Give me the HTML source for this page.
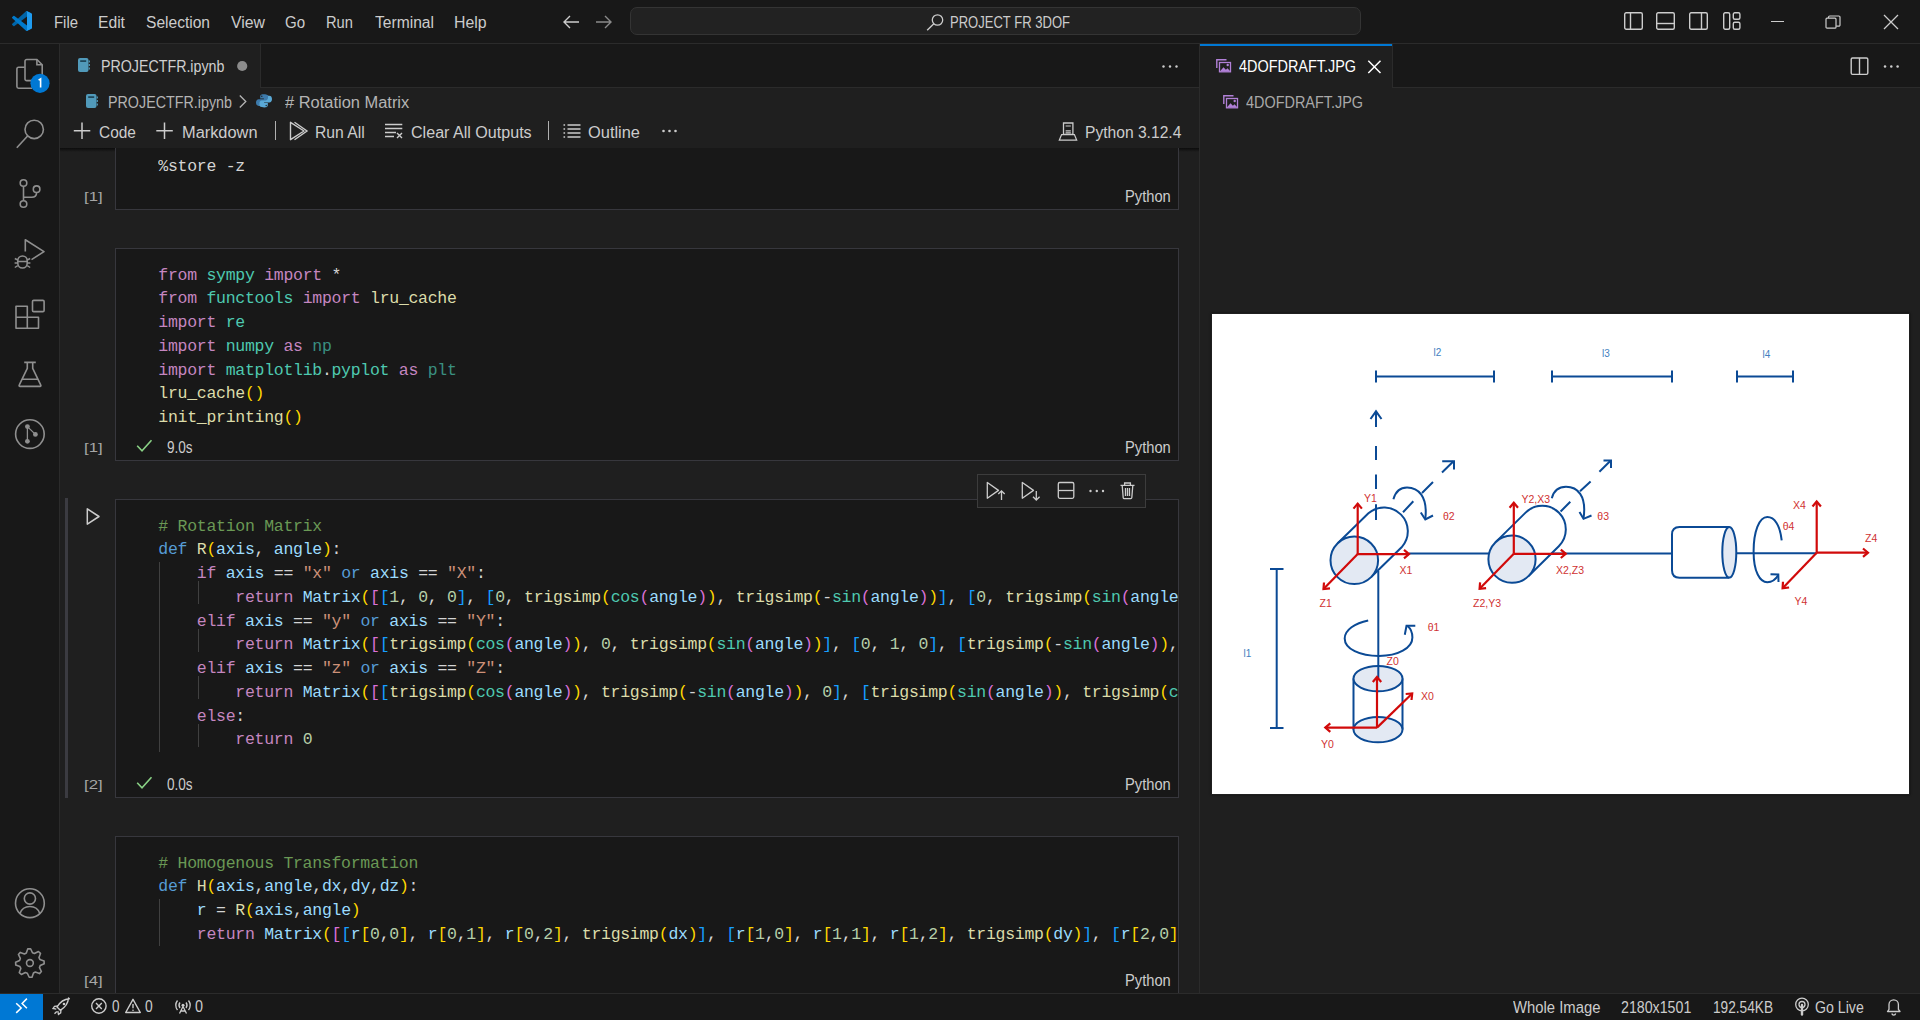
<!DOCTYPE html><html><head><meta charset="utf-8"><style>
html,body{margin:0;padding:0;width:1920px;height:1020px;overflow:hidden;background:#1f1f1f;position:relative}
.t{position:absolute;white-space:pre;line-height:1;transform-origin:0 0}
.code{position:absolute;white-space:pre;overflow:hidden;font-family:"Liberation Mono",monospace;font-size:16.5px;line-height:23.75px;letter-spacing:-0.28px}
svg{overflow:visible}
</style></head><body>
<div style="position:absolute;left:0px;top:0px;width:1920px;height:43px;background:#181818"></div>
<div style="position:absolute;left:0px;top:43px;width:1920px;height:1px;background:#2b2b2b"></div>
<div style="position:absolute;left:0px;top:44px;width:59px;height:949px;background:#181818"></div>
<div style="position:absolute;left:59px;top:44px;width:1px;height:949px;background:#2b2b2b"></div>
<div style="position:absolute;left:60px;top:44px;width:1139px;height:43px;background:#181818"></div>
<div style="position:absolute;left:60px;top:87px;width:1139px;height:1px;background:#2b2b2b"></div>
<div style="position:absolute;left:60px;top:44px;width:200px;height:44px;background:#1f1f1f"></div>
<div style="position:absolute;left:260px;top:44px;width:1px;height:43px;background:#2b2b2b"></div>
<div style="position:absolute;left:1199px;top:44px;width:1px;height:949px;background:#2b2b2b"></div>
<div style="position:absolute;left:1200px;top:44px;width:720px;height:43px;background:#181818"></div>
<div style="position:absolute;left:1200px;top:87px;width:720px;height:1px;background:#2b2b2b"></div>
<div style="position:absolute;left:1200px;top:44px;width:192px;height:44px;background:#1f1f1f"></div>
<div style="position:absolute;left:1200px;top:44px;width:192px;height:1.5px;background:#0078d4"></div>
<div style="position:absolute;left:1392px;top:44px;width:1px;height:43px;background:#2b2b2b"></div>
<div style="position:absolute;left:0px;top:993px;width:1920px;height:27px;background:#181818"></div>
<div style="position:absolute;left:0px;top:993px;width:1920px;height:1px;background:#2b2b2b"></div>
<div style="position:absolute;left:0px;top:994px;width:43px;height:26px;background:#0078d4"></div>
<div style="position:absolute;left:60px;top:148px;width:1139px;height:4px;background:linear-gradient(#0c0c0c,rgba(24,24,24,0))"></div>
<svg style="position:absolute;left:12px;top:11px;" width="20" height="20" viewBox="0 0 100 100" fill="none"><path fill="#0065a9" d="M96.5 10.8 75.9.9a6.2 6.2 0 0 0-7.1 1.2L1.4 63.6a4.2 4.2 0 0 0 0 6.1l5.5 5a4.2 4.2 0 0 0 5.3.2L93.5 13.3c2.7-2.1 6.5-.1 6.5 3.3v-.2a6.2 6.2 0 0 0-3.5-5.6z"/><path fill="#007acc" d="M96.5 89.2 75.9 99.1a6.2 6.2 0 0 1-7.1-1.2L1.4 36.4a4.2 4.2 0 0 1 0-6.1l5.5-5a4.2 4.2 0 0 1 5.3-.2l81.3 61.7c2.7 2.1 6.5.1 6.5-3.3v.2a6.2 6.2 0 0 1-3.5 5.6z"/><path fill="#1f9cf0" d="M75.9 99.1a6.2 6.2 0 0 1-7.1-1.2c2.3 2.3 6.2.7 6.2-2.6V4.7c0-3.3-3.9-4.9-6.2-2.6a6.2 6.2 0 0 1 7.1-1.2l20.6 9.9A6.2 6.2 0 0 1 100 16.4v67.2a6.2 6.2 0 0 1-3.5 5.6z"/></svg>
<div class="t" style="left:54.00px;top:15.35px;font-size:16px;color:#cccccc;font-family:'Liberation Sans', sans-serif;transform:scaleX(0.9302);">File</div>
<div class="t" style="left:98.00px;top:15.35px;font-size:16px;color:#cccccc;font-family:'Liberation Sans', sans-serif;transform:scaleX(0.9783);">Edit</div>
<div class="t" style="left:146.00px;top:15.35px;font-size:16px;color:#cccccc;font-family:'Liberation Sans', sans-serif;transform:scaleX(0.9726);">Selection</div>
<div class="t" style="left:230.50px;top:15.35px;font-size:16px;color:#cccccc;font-family:'Liberation Sans', sans-serif;transform:scaleX(0.9884);">View</div>
<div class="t" style="left:285.00px;top:15.35px;font-size:16px;color:#cccccc;font-family:'Liberation Sans', sans-serif;transform:scaleX(0.9390);">Go</div>
<div class="t" style="left:326.00px;top:15.35px;font-size:16px;color:#cccccc;font-family:'Liberation Sans', sans-serif;transform:scaleX(0.9184);">Run</div>
<div class="t" style="left:374.60px;top:15.35px;font-size:16px;color:#cccccc;font-family:'Liberation Sans', sans-serif;transform:scaleX(0.9752);">Terminal</div>
<div class="t" style="left:454.40px;top:15.35px;font-size:16px;color:#cccccc;font-family:'Liberation Sans', sans-serif;transform:scaleX(0.9909);">Help</div>
<svg style="position:absolute;left:562px;top:14px;" width="18" height="16" viewBox="0 0 18 16" fill="none"><path d="M17 8H2M8 2 2 8l6 6" stroke="#cccccc" stroke-width="1.4"/></svg>
<svg style="position:absolute;left:595px;top:14px;" width="18" height="16" viewBox="0 0 18 16" fill="none"><path d="M1 8h15M10 2l6 6-6 6" stroke="#8b8b8b" stroke-width="1.4"/></svg>
<div style="position:absolute;left:630px;top:7px;width:731px;height:28px;background:#222222;border:1px solid #343434;border-radius:7px;box-sizing:border-box"></div>
<svg style="position:absolute;left:925px;top:13px;" width="20" height="18" viewBox="0 0 20 18" fill="none"><circle cx="12.5" cy="7" r="5.2" stroke="#cccccc" stroke-width="1.3"/><path d="M8.8 10.8 2.2 17.2" stroke="#cccccc" stroke-width="1.4"/></svg>
<div class="t" style="left:950.00px;top:14.95px;font-size:16px;color:#cccccc;font-family:'Liberation Sans', sans-serif;transform:scaleX(0.8147);">PROJECT FR 3DOF</div>
<svg style="position:absolute;left:1624px;top:12px;" width="19" height="18" viewBox="0 0 19 18" fill="none"><rect x=".7" y=".7" width="17.6" height="16.6" rx="1.5" stroke="#cccccc" stroke-width="1.4"/><path d="M6.5 1v16" stroke="#cccccc" stroke-width="1.4"/></svg>
<svg style="position:absolute;left:1656px;top:12px;" width="19" height="18" viewBox="0 0 19 18" fill="none"><rect x=".7" y=".7" width="17.6" height="16.6" rx="1.5" stroke="#cccccc" stroke-width="1.4"/><path d="M1 11.5h17" stroke="#cccccc" stroke-width="1.4"/></svg>
<svg style="position:absolute;left:1689px;top:12px;" width="19" height="18" viewBox="0 0 19 18" fill="none"><rect x=".7" y=".7" width="17.6" height="16.6" rx="1.5" stroke="#cccccc" stroke-width="1.4"/><path d="M12.5 1v16" stroke="#cccccc" stroke-width="1.4"/></svg>
<svg style="position:absolute;left:1723px;top:12px;" width="18" height="18" viewBox="0 0 18 18" fill="none"><rect x=".7" y=".7" width="6" height="16.6" rx="1.5" stroke="#cccccc" stroke-width="1.4"/><rect x="10.3" y=".7" width="6.6" height="6.6" rx="1.5" stroke="#cccccc" stroke-width="1.4"/><rect x="10.3" y="10.3" width="6.6" height="7" rx="1.5" stroke="#cccccc" stroke-width="1.4"/></svg>
<div style="position:absolute;left:1771px;top:21px;width:13px;height:1.2px;background:#cccccc"></div>
<svg style="position:absolute;left:1825px;top:15px;" width="16" height="14" viewBox="0 0 16 14" fill="none"><rect x="1" y="3.2" width="10" height="10" rx="1" stroke="#cccccc" stroke-width="1.2"/><path d="M3.5 3V2.2A1.2 1.2 0 0 1 4.7 1H13.8A1.2 1.2 0 0 1 15 2.2V10A1.2 1.2 0 0 1 13.8 11.2H11.2" stroke="#cccccc" stroke-width="1.2"/></svg>
<svg style="position:absolute;left:1883px;top:14px;" width="16" height="16" viewBox="0 0 16 16" fill="none"><path d="M1 1 15 15M15 1 1 15" stroke="#cccccc" stroke-width="1.3"/></svg>
<svg style="position:absolute;left:10px;top:52px;" width="40" height="42" viewBox="10 52 40 42" fill="none"><path d="M25 61.2a1.7 1.7 0 0 1 1.7-1.7H36.9L42.2 64.8V78.9a1.7 1.7 0 0 1-1.7 1.7H26.7a1.7 1.7 0 0 1-1.7-1.7Z" stroke="#8f8f8f" stroke-width="1.6"/><path d="M36.9 59.8V64.8H42" stroke="#8f8f8f" stroke-width="1.6"/><path d="M24.6 67.2H18.6a1.7 1.7 0 0 0-1.7 1.7V86.5a1.7 1.7 0 0 0 1.7 1.7H32" stroke="#8f8f8f" stroke-width="1.6"/><circle cx="40" cy="83.3" r="9.6" fill="#0078d4"/><path d="M38.6 80.2 40.6 78.9V87.6" stroke="#ffffff" stroke-width="1.6"/></svg>
<svg style="position:absolute;left:10px;top:114px;" width="40" height="40" viewBox="10 114 40 40" fill="none"><circle cx="34.2" cy="129.4" r="9.2" stroke="#8f8f8f" stroke-width="1.6"/><path d="M27.6 136 16.8 147.8" stroke="#8f8f8f" stroke-width="1.6"/></svg>
<svg style="position:absolute;left:10px;top:174px;" width="40" height="40" viewBox="10 174 40 40" fill="none"><circle cx="23.5" cy="183" r="3.3" stroke="#8f8f8f" stroke-width="1.6"/><circle cx="23.5" cy="204" r="3.3" stroke="#8f8f8f" stroke-width="1.6"/><circle cx="36.6" cy="189.2" r="3.3" stroke="#8f8f8f" stroke-width="1.6"/><path d="M23.5 186.3V200.7M36.6 192.5c0 3.5-1.5 4.8-5 4.8H23.5" stroke="#8f8f8f" stroke-width="1.6"/></svg>
<svg style="position:absolute;left:10px;top:234px;" width="40" height="40" viewBox="10 234 40 40" fill="none"><path d="M25.3 251.5V239.8L44 251.6 31.5 259.6" stroke="#8f8f8f" stroke-width="1.6" stroke-linejoin="round"/><rect x="17.8" y="256" width="9.4" height="12" rx="4.7" stroke="#8f8f8f" stroke-width="1.6"/><path d="M17.8 261.5h9.4M14.8 258.5l3 1.5M30.2 258.5l-3 1.5M14.8 267.5l3-1.8M30.2 267.5l-3-1.8M14.6 263h3.2M27.2 263h3.2" stroke="#8f8f8f" stroke-width="1.4"/></svg>
<svg style="position:absolute;left:10px;top:294px;" width="40" height="40" viewBox="10 294 40 40" fill="none"><path d="M16 306.3h11.3v22H16zM16 317.3h22.5v11H16z" stroke="#8f8f8f" stroke-width="1.6" stroke-linejoin="round"/><rect x="32.5" y="300.4" width="11.6" height="11.2" rx="1.2" stroke="#8f8f8f" stroke-width="1.6"/></svg>
<svg style="position:absolute;left:10px;top:356px;" width="40" height="36" viewBox="10 356 40 36" fill="none"><path d="M24.2 362.4h11.6M27.3 362.4v6L19.2 385.2a.8.8 0 0 0 .7 1.2h20.2a.8.8 0 0 0 .7-1.2L32.7 368.4v-6M22.3 379.2h15.4" stroke="#8f8f8f" stroke-width="1.6" stroke-linejoin="round"/></svg>
<svg style="position:absolute;left:10px;top:414px;" width="40" height="40" viewBox="10 414 40 40" fill="none"><circle cx="29.9" cy="434.1" r="14.3" stroke="#8f8f8f" stroke-width="1.6"/><circle cx="27.4" cy="426.6" r="2.4" fill="#8f8f8f"/><circle cx="27.4" cy="441.3" r="2.4" fill="#8f8f8f"/><circle cx="35.4" cy="434.4" r="2.4" fill="#8f8f8f"/><path d="M27.4 426.6V441.3M27.4 426.6 35.4 434.4" stroke="#8f8f8f" stroke-width="1.3"/></svg>
<svg style="position:absolute;left:10px;top:882px;" width="40" height="42" viewBox="10 882 40 42" fill="none"><circle cx="29.9" cy="903.2" r="14.4" stroke="#8f8f8f" stroke-width="1.6"/><circle cx="29.9" cy="898.5" r="5.6" stroke="#8f8f8f" stroke-width="1.6"/><path d="M20 913.5c1.5-4.5 5-7 9.9-7s8.4 2.5 9.9 7" stroke="#8f8f8f" stroke-width="1.6"/></svg>
<svg style="position:absolute;left:10px;top:942px;" width="40" height="42" viewBox="10 942 40 42" fill="none"><path d="M27.80 948.85 L30.60 948.72 L32.48 952.72 L34.43 953.42 L38.42 951.51 L40.50 953.40 L38.99 957.55 L39.88 959.43 L44.05 960.90 L44.18 963.70 L40.18 965.58 L39.48 967.53 L41.39 971.52 L39.50 973.60 L35.35 972.09 L33.47 972.98 L32.00 977.15 L29.20 977.28 L27.32 973.28 L25.37 972.58 L21.38 974.49 L19.30 972.60 L20.81 968.45 L19.92 966.57 L15.75 965.10 L15.62 962.30 L19.62 960.42 L20.32 958.47 L18.41 954.48 L20.30 952.40 L24.45 953.91 L26.33 953.02Z" stroke="#8f8f8f" stroke-width="1.6" stroke-linejoin="round"/><circle cx="29.9" cy="963" r="3.4" stroke="#8f8f8f" stroke-width="1.6"/></svg>
<svg style="position:absolute;left:77px;top:57px;" width="16" height="17" viewBox="77 57 16 17" fill="none"><rect x="78" y="58" width="10.5" height="14" rx="2" fill="#519aba"/><rect x="80.2" y="60.3" width="6" height="1.6" fill="#1b3f50"/><path d="M89.3 60.5v2M89.3 64v2M89.3 67.5v2" stroke="#519aba" stroke-width="1.2"/></svg>
<div class="t" style="left:100.60px;top:59.35px;font-size:16px;color:#cfcfcf;font-family:'Liberation Sans', sans-serif;transform:scaleX(0.8897);">PROJECTFR.ipynb</div>
<svg style="position:absolute;left:236px;top:60px;" width="12" height="12" viewBox="236 60 12 12" fill="none"><circle cx="242.2" cy="66" r="5.1" fill="#8c8c8c"/></svg>
<svg style="position:absolute;left:1161px;top:64px;" width="5" height="5" viewBox="1161 64 5 5" fill="none"><circle cx="1163.5" cy="66.5" r="1.2" fill="#cccccc"/></svg>
<svg style="position:absolute;left:1168px;top:64px;" width="5" height="5" viewBox="1168 64 5 5" fill="none"><circle cx="1170" cy="66.5" r="1.2" fill="#cccccc"/></svg>
<svg style="position:absolute;left:1174px;top:64px;" width="5" height="5" viewBox="1174 64 5 5" fill="none"><circle cx="1176.5" cy="66.5" r="1.2" fill="#cccccc"/></svg>
<svg style="position:absolute;left:85px;top:93px;" width="16" height="17" viewBox="85 93 16 17" fill="none"><rect x="86" y="94" width="10.5" height="14" rx="2" fill="#519aba"/><rect x="88.2" y="96.3" width="6" height="1.6" fill="#1b3f50"/><path d="M97.3 96.5v2M97.3 100v2M97.3 103.5v2" stroke="#519aba" stroke-width="1.2"/></svg>
<div class="t" style="left:108.00px;top:95.35px;font-size:16px;color:#b4b4b4;font-family:'Liberation Sans', sans-serif;transform:scaleX(0.8940);">PROJECTFR.ipynb</div>
<svg style="position:absolute;left:236px;top:92px;" width="14" height="18" viewBox="236 92 14 18" fill="none"><path d="M239.8 95.5 245.8 101.5 239.8 107.5" stroke="#b4b4b4" stroke-width="1.3"/></svg>
<svg style="position:absolute;left:255px;top:92px;" width="18" height="18" viewBox="255 92 18 18" fill="none"><path d="M263.8 94.3c-3.6 0-3.6 1.6-3.6 2.4v1.9h3.7v.6h-5.2c-1.6 0-2.7 1.3-2.7 3.4s1.1 3.3 2.7 3.3h1.3v-1.9c0-1.5 1.2-2.7 2.7-2.7h3.5c1.3 0 2.3-1 2.3-2.3v-2.4c0-1.3-1.1-2.3-4.7-2.3zm-2 1.2a.7.7 0 1 1 0 1.4.7.7 0 0 1 0-1.4z" fill="#3d7aab"/><path d="M264.2 107.4c3.6 0 3.6-1.6 3.6-2.4v-1.9h-3.7v-.6h5.2c1.6 0 2.7-1.3 2.7-3.4s-1.1-3.3-2.7-3.3H268v1.9c0 1.5-1.2 2.7-2.7 2.7h-3.5c-1.3 0-2.3 1-2.3 2.3v2.4c0 1.3 1.1 2.3 4.7 2.3zm2-1.2a.7.7 0 1 1 0-1.4.7.7 0 0 1 0 1.4z" fill="#5aa9d6"/></svg>
<div class="t" style="left:284.60px;top:95.15px;font-size:16px;color:#b4b4b4;font-family:'Liberation Sans', sans-serif;transform:scaleX(1.0273);"># Rotation Matrix</div>
<svg style="position:absolute;left:70px;top:118px;" width="24" height="24" viewBox="70 118 24 24" fill="none"><path d="M82 122.5v16.5M73.8 130.8h16.5" stroke="#cccccc" stroke-width="1.5"/></svg>
<div class="t" style="left:99.00px;top:125.35px;font-size:16px;color:#cccccc;font-family:'Liberation Sans', sans-serif;transform:scaleX(0.9661);">Code</div>
<svg style="position:absolute;left:152px;top:118px;" width="24" height="24" viewBox="152 118 24 24" fill="none"><path d="M164.5 122.5v16.5M156.3 130.8h16.5" stroke="#cccccc" stroke-width="1.5"/></svg>
<div class="t" style="left:182.00px;top:125.35px;font-size:16px;color:#cccccc;font-family:'Liberation Sans', sans-serif;transform:scaleX(1.0230);">Markdown</div>
<div style="position:absolute;left:275px;top:121px;width:1.3px;height:19px;background:#b0b0b0"></div>
<svg style="position:absolute;left:286px;top:120px;" width="24" height="22" viewBox="286 120 24 22" fill="none"><path d="M290.5 122.3 304 131 290.5 139.7Z" stroke="#cccccc" stroke-width="1.4" stroke-linejoin="round"/><path d="M294.5 122.3 307 131 294.5 139.7" stroke="#cccccc" stroke-width="1.4"/></svg>
<div class="t" style="left:314.80px;top:125.35px;font-size:16px;color:#cccccc;font-family:'Liberation Sans', sans-serif;transform:scaleX(0.9803);">Run All</div>
<svg style="position:absolute;left:382px;top:120px;" width="24" height="22" viewBox="382 120 24 22" fill="none"><path d="M385 124.5h17.3M385 128.5h17.3M385 132.5h11M385 136.5h9" stroke="#cccccc" stroke-width="1.4"/><path d="M397 133l5 5M402 133l-5 5" stroke="#cccccc" stroke-width="1.4"/></svg>
<div class="t" style="left:410.70px;top:125.35px;font-size:16px;color:#cccccc;font-family:'Liberation Sans', sans-serif;transform:scaleX(1.0050);">Clear All Outputs</div>
<div style="position:absolute;left:548px;top:121px;width:1.3px;height:19px;background:#b0b0b0"></div>
<svg style="position:absolute;left:560px;top:120px;" width="24" height="22" viewBox="560 120 24 22" fill="none"><path d="M563.5 125h1.6M563.5 129h1.6M563.5 133h1.6M563.5 137h1.6M567.5 125h13M567.5 129h13M567.5 133h13M567.5 137h13" stroke="#cccccc" stroke-width="1.4"/></svg>
<div class="t" style="left:588.00px;top:125.35px;font-size:16px;color:#cccccc;font-family:'Liberation Sans', sans-serif;transform:scaleX(1.0256);">Outline</div>
<svg style="position:absolute;left:661px;top:129px;" width="5" height="5" viewBox="661 129 5 5" fill="none"><circle cx="663.5" cy="131" r="1.3" fill="#cccccc"/></svg>
<svg style="position:absolute;left:667px;top:129px;" width="5" height="5" viewBox="667 129 5 5" fill="none"><circle cx="669.5" cy="131" r="1.3" fill="#cccccc"/></svg>
<svg style="position:absolute;left:673px;top:129px;" width="5" height="5" viewBox="673 129 5 5" fill="none"><circle cx="675.5" cy="131" r="1.3" fill="#cccccc"/></svg>
<svg style="position:absolute;left:1056px;top:120px;" width="24" height="24" viewBox="1056 120 24 24" fill="none"><path d="M1063.5 123h9.4v11.3h-9.4z" stroke="#cccccc" stroke-width="1.3"/><path d="M1059.3 140.2h17.4l-2.3-5.6h-12.8zM1065.6 126h5.2M1065.6 130.8h5.2M1065.6 132.8h5.2" stroke="#cccccc" stroke-width="1.2"/></svg>
<div class="t" style="left:1085.40px;top:125.35px;font-size:16px;color:#cccccc;font-family:'Liberation Sans', sans-serif;transform:scaleX(0.9757);">Python 3.12.4</div>
<svg style="position:absolute;left:1214.5px;top:58px;" width="18" height="16" viewBox="1214.5 58 18 16" fill="none"><path d="M1216.3 68V59.8H1226.0" stroke="#b180d7" stroke-width="1.4"/><rect x="1219.0" y="62.5" width="11" height="9.3" stroke="#b180d7" stroke-width="1.3"/><path d="M1219.3 71.5l3.7-4.2 2.4 2.5 1.6-1.6 3 3.3z" fill="#b180d7"/><circle cx="1227.2" cy="65" r="1.2" fill="#b180d7"/></svg>
<div class="t" style="left:1238.60px;top:59.35px;font-size:16px;color:#ffffff;font-family:'Liberation Sans', sans-serif;transform:scaleX(0.9014);">4DOFDRAFT.JPG</div>
<svg style="position:absolute;left:1364px;top:57px;" width="20" height="20" viewBox="1364 57 20 20" fill="none"><path d="M1368.3 60.8 1380.5 73M1380.5 60.8 1368.3 73" stroke="#ffffff" stroke-width="1.5"/></svg>
<svg style="position:absolute;left:1848px;top:55px;" width="24" height="24" viewBox="1848 55 24 24" fill="none"><rect x="1851.2" y="58" width="16.6" height="16.4" rx="1.3" stroke="#cccccc" stroke-width="1.4"/><path d="M1859.5 58v16.4" stroke="#cccccc" stroke-width="1.4"/></svg>
<svg style="position:absolute;left:1883px;top:64px;" width="5" height="5" viewBox="1883 64 5 5" fill="none"><circle cx="1885" cy="66.5" r="1.25" fill="#cccccc"/></svg>
<svg style="position:absolute;left:1889px;top:64px;" width="5" height="5" viewBox="1889 64 5 5" fill="none"><circle cx="1891.3" cy="66.5" r="1.25" fill="#cccccc"/></svg>
<svg style="position:absolute;left:1895px;top:64px;" width="5" height="5" viewBox="1895 64 5 5" fill="none"><circle cx="1897.6" cy="66.5" r="1.25" fill="#cccccc"/></svg>
<svg style="position:absolute;left:1222px;top:94px;" width="18" height="16" viewBox="1222 94 18 16" fill="none"><path d="M1223.8 104V95.8H1233.5" stroke="#b180d7" stroke-width="1.4"/><rect x="1226.5" y="98.5" width="11" height="9.3" stroke="#b180d7" stroke-width="1.3"/><path d="M1226.8 107.5l3.7-4.2 2.4 2.5 1.6-1.6 3 3.3z" fill="#b180d7"/><circle cx="1234.7" cy="101" r="1.2" fill="#b180d7"/></svg>
<div class="t" style="left:1246.00px;top:95.35px;font-size:16px;color:#a9a9a9;font-family:'Liberation Sans', sans-serif;transform:scaleX(0.9014);">4DOFDRAFT.JPG</div>
<svg style="position:absolute;left:10px;top:996px;" width="24" height="22" viewBox="10 996 24 22" fill="none"><path d="M16.2 1003.2 21.2 1008 16.2 1012.9M26.9 998.6 22.1 1003.4 26.9 1008.3" stroke="#ffffff" stroke-width="1.5"/></svg>
<svg style="position:absolute;left:50px;top:995px;" width="24" height="22" viewBox="50 995 24 22" fill="none"><path d="M69.3 998.8c-5 .3-9 2.8-12.3 8.2l3.3 3.3c5.4-3.3 7.9-7.3 8.2-12.3z" stroke="#cccccc" stroke-width="1.4" stroke-linejoin="round"/><path d="M58 1006l-3.5.3-1.5 2.2 3.3.7M61 1009.3l-.3 3.5-2.2 1.5-.7-3.3M54.5 1013.8l2.3-2.3" stroke="#cccccc" stroke-width="1.3"/><circle cx="64" cy="1004" r="1.3" fill="#cccccc"/></svg>
<svg style="position:absolute;left:88px;top:995px;" width="22" height="22" viewBox="88 995 22 22" fill="none"><circle cx="98.9" cy="1006" r="7.2" stroke="#cccccc" stroke-width="1.4"/><path d="M96 1003.1l5.8 5.8M101.8 1003.1l-5.8 5.8" stroke="#cccccc" stroke-width="1.4"/></svg>
<div class="t" style="left:111.70px;top:999.05px;font-size:16px;color:#cccccc;font-family:'Liberation Sans', sans-serif;transform:scaleX(0.8427);">0</div>
<svg style="position:absolute;left:123px;top:995px;" width="20" height="20" viewBox="123 995 20 20" fill="none"><path d="M133 999.3 140.3 1012.5H125.7Z" stroke="#cccccc" stroke-width="1.4" stroke-linejoin="round"/><path d="M133 1004v4.3" stroke="#cccccc" stroke-width="1.4"/><circle cx="133" cy="1010.3" r=".8" fill="#cccccc"/></svg>
<div class="t" style="left:145.30px;top:999.05px;font-size:16px;color:#cccccc;font-family:'Liberation Sans', sans-serif;transform:scaleX(0.8652);">0</div>
<svg style="position:absolute;left:172px;top:995px;" width="22" height="22" viewBox="172 995 22 22" fill="none"><path d="M177.5 1000.5a8 8 0 0 0 0 9.5M188.5 1000.5a8 8 0 0 1 0 9.5M180 1002.5a4.5 4.5 0 0 0 0 5.5M186 1002.5a4.5 4.5 0 0 1 0 5.5" stroke="#cccccc" stroke-width="1.3"/><circle cx="183" cy="1005.2" r="1.5" fill="#cccccc"/><path d="M183 1006.5l-3.5 7M183 1006.5l3.5 7M180.8 1011h4.4" stroke="#cccccc" stroke-width="1.3"/></svg>
<div class="t" style="left:195.00px;top:999.05px;font-size:16px;color:#cccccc;font-family:'Liberation Sans', sans-serif;transform:scaleX(0.8989);">0</div>
<div class="t" style="left:1512.80px;top:999.65px;font-size:16px;color:#cccccc;font-family:'Liberation Sans', sans-serif;transform:scaleX(0.9279);">Whole Image</div>
<div class="t" style="left:1621.00px;top:999.65px;font-size:16px;color:#cccccc;font-family:'Liberation Sans', sans-serif;transform:scaleX(0.8876);">2180x1501</div>
<div class="t" style="left:1712.60px;top:999.65px;font-size:16px;color:#cccccc;font-family:'Liberation Sans', sans-serif;transform:scaleX(0.8549);">192.54KB</div>
<svg style="position:absolute;left:1793px;top:996px;" width="18" height="20" viewBox="1793 996 18 20" fill="none"><circle cx="1802" cy="1004.5" r="6.3" stroke="#cccccc" stroke-width="1.3"/><circle cx="1802" cy="1004.5" r="3" stroke="#cccccc" stroke-width="1.3"/><path d="M1802 1005v9.5" stroke="#cccccc" stroke-width="2.4" stroke-linecap="round"/></svg>
<div class="t" style="left:1814.60px;top:999.65px;font-size:16px;color:#cccccc;font-family:'Liberation Sans', sans-serif;transform:scaleX(0.8857);">Go Live</div>
<svg style="position:absolute;left:1884px;top:996px;" width="18" height="20" viewBox="1884 996 18 20" fill="none"><path d="M1887.5 1011.5h12.5l-1.6-2.2v-4.8a4.7 4.7 0 0 0-9.4 0v4.8z" stroke="#cccccc" stroke-width="1.3" stroke-linejoin="round"/><path d="M1891.8 1013.5a2 2 0 0 0 3.9 0" stroke="#cccccc" stroke-width="1.3"/></svg>
<div style="position:absolute;left:60px;top:148px;width:1139px;height:845px;overflow:hidden" id="nb">
<div style="position:absolute;left:-60px;top:-148px;width:1920px;height:1020px">
<div style="position:absolute;left:115px;top:140px;width:1064px;height:70px;background:#181818;border:1px solid #37373d;box-sizing:border-box"></div>
<div class="code" style="left:158.3px;top:154.73px;width:1019.7px"><span style="color:#d4d4d4">%store -z</span></div>
<div class="t" style="left:84.00px;top:189.87px;font-size:13.5px;color:#a6a6a6;font-family:'Liberation Sans', sans-serif;transform:scaleX(1.2400);">[1]</div>
<div class="t" style="left:1125.30px;top:188.85px;font-size:16px;color:#cccccc;font-family:'Liberation Sans', sans-serif;transform:scaleX(0.9177);">Python</div>
<div style="position:absolute;left:115px;top:248px;width:1064px;height:213px;background:#181818;border:1px solid #37373d;box-sizing:border-box"></div>
<div class="code" style="left:158.3px;top:263.73px;width:1019.7px"><span style="color:#c586c0">from</span><span style="color:#d4d4d4"> </span><span style="color:#4ec9b0">sympy</span><span style="color:#d4d4d4"> </span><span style="color:#c586c0">import</span><span style="color:#d4d4d4"> </span><span style="color:#d4d4d4">*</span></div>
<div class="code" style="left:158.3px;top:287.48px;width:1019.7px"><span style="color:#c586c0">from</span><span style="color:#d4d4d4"> </span><span style="color:#4ec9b0">functools</span><span style="color:#d4d4d4"> </span><span style="color:#c586c0">import</span><span style="color:#d4d4d4"> </span><span style="color:#dcdcaa">lru_cache</span></div>
<div class="code" style="left:158.3px;top:311.23px;width:1019.7px"><span style="color:#c586c0">import</span><span style="color:#d4d4d4"> </span><span style="color:#4ec9b0">re</span></div>
<div class="code" style="left:158.3px;top:334.98px;width:1019.7px"><span style="color:#c586c0">import</span><span style="color:#d4d4d4"> </span><span style="color:#4ec9b0">numpy</span><span style="color:#d4d4d4"> </span><span style="color:#c586c0">as</span><span style="color:#d4d4d4"> </span><span style="color:#3a8f80">np</span></div>
<div class="code" style="left:158.3px;top:358.73px;width:1019.7px"><span style="color:#c586c0">import</span><span style="color:#d4d4d4"> </span><span style="color:#4ec9b0">matplotlib</span><span style="color:#d4d4d4">.</span><span style="color:#4ec9b0">pyplot</span><span style="color:#d4d4d4"> </span><span style="color:#c586c0">as</span><span style="color:#d4d4d4"> </span><span style="color:#3a8f80">plt</span></div>
<div class="code" style="left:158.3px;top:382.48px;width:1019.7px"><span style="color:#dcdcaa">lru_cache</span><span style="color:#ffd700">(</span><span style="color:#ffd700">)</span></div>
<div class="code" style="left:158.3px;top:406.23px;width:1019.7px"><span style="color:#dcdcaa">init_printing</span><span style="color:#ffd700">(</span><span style="color:#ffd700">)</span></div>
<div class="t" style="left:84.00px;top:440.87px;font-size:13.5px;color:#a6a6a6;font-family:'Liberation Sans', sans-serif;transform:scaleX(1.2400);">[1]</div>
<svg style="position:absolute;left:134px;top:438px;" width="20" height="16" viewBox="134 438 20 16" fill="none"><path d="M137.2 445.8 142 450.8 151.5 440.2" stroke="#89d185" stroke-width="1.6"/></svg>
<div class="t" style="left:167.40px;top:439.85px;font-size:16px;color:#cccccc;font-family:'Liberation Sans', sans-serif;transform:scaleX(0.8477);">9.0s</div>
<div class="t" style="left:1125.30px;top:439.85px;font-size:16px;color:#cccccc;font-family:'Liberation Sans', sans-serif;transform:scaleX(0.9177);">Python</div>
<div style="position:absolute;left:65px;top:498px;width:3px;height:300px;background:#3b3b41"></div>
<div style="position:absolute;left:115px;top:499px;width:1064px;height:299px;background:#181818;border:1px solid #37373d;box-sizing:border-box"></div>
<div class="code" style="left:158.3px;top:514.73px;width:1019.7px"><span style="color:#6a9955"># Rotation Matrix</span></div>
<div class="code" style="left:158.3px;top:538.48px;width:1019.7px"><span style="color:#569cd6">def</span><span style="color:#d4d4d4"> </span><span style="color:#dcdcaa">R</span><span style="color:#ffd700">(</span><span style="color:#9cdcfe">axis</span><span style="color:#d4d4d4">,</span><span style="color:#d4d4d4"> </span><span style="color:#9cdcfe">angle</span><span style="color:#ffd700">)</span><span style="color:#d4d4d4">:</span></div>
<div class="code" style="left:158.3px;top:562.23px;width:1019.7px"><span style="color:#d4d4d4"> </span><span style="color:#d4d4d4"> </span><span style="color:#d4d4d4"> </span><span style="color:#d4d4d4"> </span><span style="color:#c586c0">if</span><span style="color:#d4d4d4"> </span><span style="color:#9cdcfe">axis</span><span style="color:#d4d4d4"> </span><span style="color:#d4d4d4">=</span><span style="color:#d4d4d4">=</span><span style="color:#d4d4d4"> </span><span style="color:#ce9178">&quot;x&quot;</span><span style="color:#d4d4d4"> </span><span style="color:#569cd6">or</span><span style="color:#d4d4d4"> </span><span style="color:#9cdcfe">axis</span><span style="color:#d4d4d4"> </span><span style="color:#d4d4d4">=</span><span style="color:#d4d4d4">=</span><span style="color:#d4d4d4"> </span><span style="color:#ce9178">&quot;X&quot;</span><span style="color:#d4d4d4">:</span></div>
<div class="code" style="left:158.3px;top:585.98px;width:1019.7px"><span style="color:#d4d4d4"> </span><span style="color:#d4d4d4"> </span><span style="color:#d4d4d4"> </span><span style="color:#d4d4d4"> </span><span style="color:#d4d4d4"> </span><span style="color:#d4d4d4"> </span><span style="color:#d4d4d4"> </span><span style="color:#d4d4d4"> </span><span style="color:#c586c0">return</span><span style="color:#d4d4d4"> </span><span style="color:#9cdcfe">Matrix</span><span style="color:#ffd700">(</span><span style="color:#da70d6">[</span><span style="color:#179fff">[</span><span style="color:#b5cea8">1</span><span style="color:#d4d4d4">,</span><span style="color:#d4d4d4"> </span><span style="color:#b5cea8">0</span><span style="color:#d4d4d4">,</span><span style="color:#d4d4d4"> </span><span style="color:#b5cea8">0</span><span style="color:#179fff">]</span><span style="color:#d4d4d4">,</span><span style="color:#d4d4d4"> </span><span style="color:#179fff">[</span><span style="color:#b5cea8">0</span><span style="color:#d4d4d4">,</span><span style="color:#d4d4d4"> </span><span style="color:#dcdcaa">trigsimp</span><span style="color:#ffd700">(</span><span style="color:#4ec9b0">cos</span><span style="color:#da70d6">(</span><span style="color:#9cdcfe">angle</span><span style="color:#da70d6">)</span><span style="color:#ffd700">)</span><span style="color:#d4d4d4">,</span><span style="color:#d4d4d4"> </span><span style="color:#dcdcaa">trigsimp</span><span style="color:#ffd700">(</span><span style="color:#d4d4d4">-</span><span style="color:#4ec9b0">sin</span><span style="color:#da70d6">(</span><span style="color:#9cdcfe">angle</span><span style="color:#da70d6">)</span><span style="color:#ffd700">)</span><span style="color:#179fff">]</span><span style="color:#d4d4d4">,</span><span style="color:#d4d4d4"> </span><span style="color:#179fff">[</span><span style="color:#b5cea8">0</span><span style="color:#d4d4d4">,</span><span style="color:#d4d4d4"> </span><span style="color:#dcdcaa">trigsimp</span><span style="color:#ffd700">(</span><span style="color:#4ec9b0">sin</span><span style="color:#da70d6">(</span><span style="color:#9cdcfe">angle</span><span style="color:#da70d6">)</span><span style="color:#ffd700">)</span><span style="color:#d4d4d4">,</span><span style="color:#d4d4d4"> </span><span style="color:#dcdcaa">trigsimp</span><span style="color:#ffd700">(</span><span style="color:#4ec9b0">cos</span><span style="color:#da70d6">(</span><span style="color:#9cdcfe">angle</span><span style="color:#da70d6">)</span><span style="color:#ffd700">)</span><span style="color:#179fff">]</span><span style="color:#da70d6">]</span><span style="color:#ffd700">)</span></div>
<div class="code" style="left:158.3px;top:609.73px;width:1019.7px"><span style="color:#d4d4d4"> </span><span style="color:#d4d4d4"> </span><span style="color:#d4d4d4"> </span><span style="color:#d4d4d4"> </span><span style="color:#c586c0">elif</span><span style="color:#d4d4d4"> </span><span style="color:#9cdcfe">axis</span><span style="color:#d4d4d4"> </span><span style="color:#d4d4d4">=</span><span style="color:#d4d4d4">=</span><span style="color:#d4d4d4"> </span><span style="color:#ce9178">&quot;y&quot;</span><span style="color:#d4d4d4"> </span><span style="color:#569cd6">or</span><span style="color:#d4d4d4"> </span><span style="color:#9cdcfe">axis</span><span style="color:#d4d4d4"> </span><span style="color:#d4d4d4">=</span><span style="color:#d4d4d4">=</span><span style="color:#d4d4d4"> </span><span style="color:#ce9178">&quot;Y&quot;</span><span style="color:#d4d4d4">:</span></div>
<div class="code" style="left:158.3px;top:633.48px;width:1019.7px"><span style="color:#d4d4d4"> </span><span style="color:#d4d4d4"> </span><span style="color:#d4d4d4"> </span><span style="color:#d4d4d4"> </span><span style="color:#d4d4d4"> </span><span style="color:#d4d4d4"> </span><span style="color:#d4d4d4"> </span><span style="color:#d4d4d4"> </span><span style="color:#c586c0">return</span><span style="color:#d4d4d4"> </span><span style="color:#9cdcfe">Matrix</span><span style="color:#ffd700">(</span><span style="color:#da70d6">[</span><span style="color:#179fff">[</span><span style="color:#dcdcaa">trigsimp</span><span style="color:#ffd700">(</span><span style="color:#4ec9b0">cos</span><span style="color:#da70d6">(</span><span style="color:#9cdcfe">angle</span><span style="color:#da70d6">)</span><span style="color:#ffd700">)</span><span style="color:#d4d4d4">,</span><span style="color:#d4d4d4"> </span><span style="color:#b5cea8">0</span><span style="color:#d4d4d4">,</span><span style="color:#d4d4d4"> </span><span style="color:#dcdcaa">trigsimp</span><span style="color:#ffd700">(</span><span style="color:#4ec9b0">sin</span><span style="color:#da70d6">(</span><span style="color:#9cdcfe">angle</span><span style="color:#da70d6">)</span><span style="color:#ffd700">)</span><span style="color:#179fff">]</span><span style="color:#d4d4d4">,</span><span style="color:#d4d4d4"> </span><span style="color:#179fff">[</span><span style="color:#b5cea8">0</span><span style="color:#d4d4d4">,</span><span style="color:#d4d4d4"> </span><span style="color:#b5cea8">1</span><span style="color:#d4d4d4">,</span><span style="color:#d4d4d4"> </span><span style="color:#b5cea8">0</span><span style="color:#179fff">]</span><span style="color:#d4d4d4">,</span><span style="color:#d4d4d4"> </span><span style="color:#179fff">[</span><span style="color:#dcdcaa">trigsimp</span><span style="color:#ffd700">(</span><span style="color:#d4d4d4">-</span><span style="color:#4ec9b0">sin</span><span style="color:#da70d6">(</span><span style="color:#9cdcfe">angle</span><span style="color:#da70d6">)</span><span style="color:#ffd700">)</span><span style="color:#d4d4d4">,</span><span style="color:#d4d4d4"> </span><span style="color:#b5cea8">0</span><span style="color:#d4d4d4">,</span><span style="color:#d4d4d4"> </span><span style="color:#dcdcaa">trigsimp</span><span style="color:#ffd700">(</span><span style="color:#4ec9b0">cos</span><span style="color:#da70d6">(</span><span style="color:#9cdcfe">angle</span><span style="color:#da70d6">)</span><span style="color:#ffd700">)</span><span style="color:#179fff">]</span><span style="color:#da70d6">]</span><span style="color:#ffd700">)</span></div>
<div class="code" style="left:158.3px;top:657.23px;width:1019.7px"><span style="color:#d4d4d4"> </span><span style="color:#d4d4d4"> </span><span style="color:#d4d4d4"> </span><span style="color:#d4d4d4"> </span><span style="color:#c586c0">elif</span><span style="color:#d4d4d4"> </span><span style="color:#9cdcfe">axis</span><span style="color:#d4d4d4"> </span><span style="color:#d4d4d4">=</span><span style="color:#d4d4d4">=</span><span style="color:#d4d4d4"> </span><span style="color:#ce9178">&quot;z&quot;</span><span style="color:#d4d4d4"> </span><span style="color:#569cd6">or</span><span style="color:#d4d4d4"> </span><span style="color:#9cdcfe">axis</span><span style="color:#d4d4d4"> </span><span style="color:#d4d4d4">=</span><span style="color:#d4d4d4">=</span><span style="color:#d4d4d4"> </span><span style="color:#ce9178">&quot;Z&quot;</span><span style="color:#d4d4d4">:</span></div>
<div class="code" style="left:158.3px;top:680.98px;width:1019.7px"><span style="color:#d4d4d4"> </span><span style="color:#d4d4d4"> </span><span style="color:#d4d4d4"> </span><span style="color:#d4d4d4"> </span><span style="color:#d4d4d4"> </span><span style="color:#d4d4d4"> </span><span style="color:#d4d4d4"> </span><span style="color:#d4d4d4"> </span><span style="color:#c586c0">return</span><span style="color:#d4d4d4"> </span><span style="color:#9cdcfe">Matrix</span><span style="color:#ffd700">(</span><span style="color:#da70d6">[</span><span style="color:#179fff">[</span><span style="color:#dcdcaa">trigsimp</span><span style="color:#ffd700">(</span><span style="color:#4ec9b0">cos</span><span style="color:#da70d6">(</span><span style="color:#9cdcfe">angle</span><span style="color:#da70d6">)</span><span style="color:#ffd700">)</span><span style="color:#d4d4d4">,</span><span style="color:#d4d4d4"> </span><span style="color:#dcdcaa">trigsimp</span><span style="color:#ffd700">(</span><span style="color:#d4d4d4">-</span><span style="color:#4ec9b0">sin</span><span style="color:#da70d6">(</span><span style="color:#9cdcfe">angle</span><span style="color:#da70d6">)</span><span style="color:#ffd700">)</span><span style="color:#d4d4d4">,</span><span style="color:#d4d4d4"> </span><span style="color:#b5cea8">0</span><span style="color:#179fff">]</span><span style="color:#d4d4d4">,</span><span style="color:#d4d4d4"> </span><span style="color:#179fff">[</span><span style="color:#dcdcaa">trigsimp</span><span style="color:#ffd700">(</span><span style="color:#4ec9b0">sin</span><span style="color:#da70d6">(</span><span style="color:#9cdcfe">angle</span><span style="color:#da70d6">)</span><span style="color:#ffd700">)</span><span style="color:#d4d4d4">,</span><span style="color:#d4d4d4"> </span><span style="color:#dcdcaa">trigsimp</span><span style="color:#ffd700">(</span><span style="color:#4ec9b0">cos</span><span style="color:#da70d6">(</span><span style="color:#9cdcfe">angle</span><span style="color:#da70d6">)</span><span style="color:#ffd700">)</span><span style="color:#d4d4d4">,</span><span style="color:#d4d4d4"> </span><span style="color:#b5cea8">0</span><span style="color:#179fff">]</span><span style="color:#d4d4d4">,</span><span style="color:#d4d4d4"> </span><span style="color:#179fff">[</span><span style="color:#b5cea8">0</span><span style="color:#d4d4d4">,</span><span style="color:#d4d4d4"> </span><span style="color:#b5cea8">0</span><span style="color:#d4d4d4">,</span><span style="color:#d4d4d4"> </span><span style="color:#b5cea8">1</span><span style="color:#179fff">]</span><span style="color:#da70d6">]</span><span style="color:#ffd700">)</span></div>
<div class="code" style="left:158.3px;top:704.73px;width:1019.7px"><span style="color:#d4d4d4"> </span><span style="color:#d4d4d4"> </span><span style="color:#d4d4d4"> </span><span style="color:#d4d4d4"> </span><span style="color:#c586c0">else</span><span style="color:#d4d4d4">:</span></div>
<div class="code" style="left:158.3px;top:728.48px;width:1019.7px"><span style="color:#d4d4d4"> </span><span style="color:#d4d4d4"> </span><span style="color:#d4d4d4"> </span><span style="color:#d4d4d4"> </span><span style="color:#d4d4d4"> </span><span style="color:#d4d4d4"> </span><span style="color:#d4d4d4"> </span><span style="color:#d4d4d4"> </span><span style="color:#c586c0">return</span><span style="color:#d4d4d4"> </span><span style="color:#b5cea8">0</span></div>
<div class="t" style="left:84.00px;top:777.87px;font-size:13.5px;color:#a6a6a6;font-family:'Liberation Sans', sans-serif;transform:scaleX(1.2400);">[2]</div>
<svg style="position:absolute;left:134px;top:775px;" width="20" height="16" viewBox="134 775 20 16" fill="none"><path d="M137.2 782.8 142 787.8 151.5 777.2" stroke="#89d185" stroke-width="1.6"/></svg>
<div class="t" style="left:167.40px;top:776.85px;font-size:16px;color:#cccccc;font-family:'Liberation Sans', sans-serif;transform:scaleX(0.8477);">0.0s</div>
<div class="t" style="left:1125.30px;top:776.85px;font-size:16px;color:#cccccc;font-family:'Liberation Sans', sans-serif;transform:scaleX(0.9177);">Python</div>
<div style="position:absolute;left:159px;top:562px;width:1px;height:190px;background:#404040"></div>
<div style="position:absolute;left:197.5px;top:581.25px;width:1px;height:23.0px;background:#404040"></div>
<div style="position:absolute;left:197.5px;top:628.75px;width:1px;height:23.0px;background:#404040"></div>
<div style="position:absolute;left:197.5px;top:676.25px;width:1px;height:23.0px;background:#404040"></div>
<div style="position:absolute;left:197.5px;top:723.75px;width:1px;height:23.0px;background:#404040"></div>
<svg style="position:absolute;left:84px;top:506px;" width="18" height="21" viewBox="84 506 18 21" fill="none"><path d="M87.3 508.8 99 516.5 87.3 524.2Z" stroke="#cccccc" stroke-width="1.5" stroke-linejoin="round"/></svg>
<div style="position:absolute;left:115px;top:836px;width:1064px;height:158px;background:#181818;border:1px solid #37373d;box-sizing:border-box"></div>
<div class="code" style="left:158.3px;top:851.73px;width:1019.7px"><span style="color:#6a9955"># Homogenous Transformation</span></div>
<div class="code" style="left:158.3px;top:875.48px;width:1019.7px"><span style="color:#569cd6">def</span><span style="color:#d4d4d4"> </span><span style="color:#dcdcaa">H</span><span style="color:#ffd700">(</span><span style="color:#9cdcfe">axis</span><span style="color:#d4d4d4">,</span><span style="color:#9cdcfe">angle</span><span style="color:#d4d4d4">,</span><span style="color:#9cdcfe">dx</span><span style="color:#d4d4d4">,</span><span style="color:#9cdcfe">dy</span><span style="color:#d4d4d4">,</span><span style="color:#9cdcfe">dz</span><span style="color:#ffd700">)</span><span style="color:#d4d4d4">:</span></div>
<div class="code" style="left:158.3px;top:899.23px;width:1019.7px"><span style="color:#d4d4d4"> </span><span style="color:#d4d4d4"> </span><span style="color:#d4d4d4"> </span><span style="color:#d4d4d4"> </span><span style="color:#9cdcfe">r</span><span style="color:#d4d4d4"> </span><span style="color:#d4d4d4">=</span><span style="color:#d4d4d4"> </span><span style="color:#dcdcaa">R</span><span style="color:#ffd700">(</span><span style="color:#9cdcfe">axis</span><span style="color:#d4d4d4">,</span><span style="color:#9cdcfe">angle</span><span style="color:#ffd700">)</span></div>
<div class="code" style="left:158.3px;top:922.98px;width:1019.7px"><span style="color:#d4d4d4"> </span><span style="color:#d4d4d4"> </span><span style="color:#d4d4d4"> </span><span style="color:#d4d4d4"> </span><span style="color:#c586c0">return</span><span style="color:#d4d4d4"> </span><span style="color:#9cdcfe">Matrix</span><span style="color:#ffd700">(</span><span style="color:#da70d6">[</span><span style="color:#179fff">[</span><span style="color:#9cdcfe">r</span><span style="color:#ffd700">[</span><span style="color:#b5cea8">0</span><span style="color:#d4d4d4">,</span><span style="color:#b5cea8">0</span><span style="color:#ffd700">]</span><span style="color:#d4d4d4">,</span><span style="color:#d4d4d4"> </span><span style="color:#9cdcfe">r</span><span style="color:#ffd700">[</span><span style="color:#b5cea8">0</span><span style="color:#d4d4d4">,</span><span style="color:#b5cea8">1</span><span style="color:#ffd700">]</span><span style="color:#d4d4d4">,</span><span style="color:#d4d4d4"> </span><span style="color:#9cdcfe">r</span><span style="color:#ffd700">[</span><span style="color:#b5cea8">0</span><span style="color:#d4d4d4">,</span><span style="color:#b5cea8">2</span><span style="color:#ffd700">]</span><span style="color:#d4d4d4">,</span><span style="color:#d4d4d4"> </span><span style="color:#dcdcaa">trigsimp</span><span style="color:#ffd700">(</span><span style="color:#9cdcfe">dx</span><span style="color:#ffd700">)</span><span style="color:#179fff">]</span><span style="color:#d4d4d4">,</span><span style="color:#d4d4d4"> </span><span style="color:#179fff">[</span><span style="color:#9cdcfe">r</span><span style="color:#ffd700">[</span><span style="color:#b5cea8">1</span><span style="color:#d4d4d4">,</span><span style="color:#b5cea8">0</span><span style="color:#ffd700">]</span><span style="color:#d4d4d4">,</span><span style="color:#d4d4d4"> </span><span style="color:#9cdcfe">r</span><span style="color:#ffd700">[</span><span style="color:#b5cea8">1</span><span style="color:#d4d4d4">,</span><span style="color:#b5cea8">1</span><span style="color:#ffd700">]</span><span style="color:#d4d4d4">,</span><span style="color:#d4d4d4"> </span><span style="color:#9cdcfe">r</span><span style="color:#ffd700">[</span><span style="color:#b5cea8">1</span><span style="color:#d4d4d4">,</span><span style="color:#b5cea8">2</span><span style="color:#ffd700">]</span><span style="color:#d4d4d4">,</span><span style="color:#d4d4d4"> </span><span style="color:#dcdcaa">trigsimp</span><span style="color:#ffd700">(</span><span style="color:#9cdcfe">dy</span><span style="color:#ffd700">)</span><span style="color:#179fff">]</span><span style="color:#d4d4d4">,</span><span style="color:#d4d4d4"> </span><span style="color:#179fff">[</span><span style="color:#9cdcfe">r</span><span style="color:#ffd700">[</span><span style="color:#b5cea8">2</span><span style="color:#d4d4d4">,</span><span style="color:#b5cea8">0</span><span style="color:#ffd700">]</span><span style="color:#d4d4d4">,</span><span style="color:#d4d4d4"> </span><span style="color:#9cdcfe">r</span><span style="color:#ffd700">[</span><span style="color:#b5cea8">2</span><span style="color:#d4d4d4">,</span><span style="color:#b5cea8">1</span><span style="color:#ffd700">]</span><span style="color:#d4d4d4">,</span><span style="color:#d4d4d4"> </span><span style="color:#9cdcfe">r</span><span style="color:#ffd700">[</span><span style="color:#b5cea8">2</span><span style="color:#d4d4d4">,</span><span style="color:#b5cea8">2</span><span style="color:#ffd700">]</span><span style="color:#d4d4d4">,</span><span style="color:#d4d4d4"> </span><span style="color:#dcdcaa">trigsimp</span><span style="color:#ffd700">(</span><span style="color:#9cdcfe">dz</span><span style="color:#ffd700">)</span><span style="color:#179fff">]</span><span style="color:#d4d4d4">,</span><span style="color:#d4d4d4"> </span><span style="color:#179fff">[</span><span style="color:#b5cea8">0</span><span style="color:#d4d4d4">,</span><span style="color:#d4d4d4"> </span><span style="color:#b5cea8">0</span><span style="color:#d4d4d4">,</span><span style="color:#d4d4d4"> </span><span style="color:#b5cea8">0</span><span style="color:#d4d4d4">,</span><span style="color:#d4d4d4"> </span><span style="color:#b5cea8">1</span><span style="color:#179fff">]</span><span style="color:#da70d6">]</span><span style="color:#ffd700">)</span></div>
<div class="t" style="left:84.00px;top:973.87px;font-size:13.5px;color:#a6a6a6;font-family:'Liberation Sans', sans-serif;transform:scaleX(1.2400);">[4]</div>
<div class="t" style="left:1125.30px;top:972.85px;font-size:16px;color:#cccccc;font-family:'Liberation Sans', sans-serif;transform:scaleX(0.9177);">Python</div>
<div style="position:absolute;left:159px;top:899px;width:1px;height:47px;background:#404040"></div>
<div style="position:absolute;left:977px;top:474px;width:169px;height:34px;background:#1f1f1f;border:1px solid #3c3c3c;box-sizing:border-box"></div>
<svg style="position:absolute;left:982px;top:478px;" width="60" height="26" viewBox="982 478 60 26" fill="none"><path d="M987.3 482.5 998.5 490.4 987.3 498.2Z" stroke="#cccccc" stroke-width="1.3" stroke-linejoin="round"/><path d="M1001.5 500v-9M998.3 494l3.2-3.2 3.2 3.2" stroke="#cccccc" stroke-width="1.3"/></svg>
<svg style="position:absolute;left:1016px;top:478px;" width="30" height="26" viewBox="1016 478 30 26" fill="none"><path d="M1022.3 482.5 1033.5 490.4 1022.3 498.2Z" stroke="#cccccc" stroke-width="1.3" stroke-linejoin="round"/><path d="M1036.3 491v9M1033 496.8l3.3 3.2 3.3-3.2" stroke="#cccccc" stroke-width="1.3"/></svg>
<svg style="position:absolute;left:1054px;top:478px;" width="24" height="24" viewBox="1054 478 24 24" fill="none"><rect x="1058.3" y="482.5" width="15.5" height="15.8" rx="1.5" stroke="#cccccc" stroke-width="1.3"/><path d="M1058.5 490.5h15.2" stroke="#cccccc" stroke-width="1.3"/></svg>
<svg style="position:absolute;left:1088px;top:489px;" width="5" height="5" viewBox="1088 489 5 5" fill="none"><circle cx="1090.5" cy="491" r="1.2" fill="#cccccc"/></svg>
<svg style="position:absolute;left:1094px;top:489px;" width="5" height="5" viewBox="1094 489 5 5" fill="none"><circle cx="1096.8" cy="491" r="1.2" fill="#cccccc"/></svg>
<svg style="position:absolute;left:1101px;top:489px;" width="5" height="5" viewBox="1101 489 5 5" fill="none"><circle cx="1103" cy="491" r="1.2" fill="#cccccc"/></svg>
<svg style="position:absolute;left:1116px;top:478px;" width="22" height="24" viewBox="1116 478 22 24" fill="none"><path d="M1120.5 485.3h14M1124.6 485.3v-2.3h5.8v2.3M1122.2 485.5l1 12.2a1 1 0 0 0 1 .9h6.6a1 1 0 0 0 1-.9l1-12.2M1125.5 488v8M1127.5 488v8M1129.5 488v8" stroke="#cccccc" stroke-width="1.3"/></svg>
</div></div>
<svg style="position:absolute;left:1212px;top:314px" width="697" height="480" viewBox="1212 314 697 480"><rect x="1212" y="314" width="697" height="480" fill="#ffffff"/><path d="M1376 376.5H1494M1376 370.5V382.5M1494 370.5V382.5" stroke="#0b4a95" stroke-width="2"/><path d="M1552 376.5H1672M1552 370.5V382.5M1672 370.5V382.5" stroke="#0b4a95" stroke-width="2"/><path d="M1737 376.5H1793M1737 370.5V382.5M1793 370.5V382.5" stroke="#0b4a95" stroke-width="2"/><text x="1433.5" y="356" fill="#3f7fc0" font-size="10" font-family="Liberation Sans, sans-serif">l2</text><text x="1602" y="356.5" fill="#3f7fc0" font-size="10" font-family="Liberation Sans, sans-serif">l3</text><text x="1762.5" y="358" fill="#3f7fc0" font-size="10" font-family="Liberation Sans, sans-serif">l4</text><path d="M1276.7 569V728M1270 569H1283.5M1270 728H1283.5" stroke="#0b4a95" stroke-width="2"/><text x="1243.5" y="657" fill="#3f7fc0" font-size="10" font-family="Liberation Sans, sans-serif">l1</text><path d="M1409 553.6H1672M1736.5 553.3H1816.7" stroke="#0b4a95" stroke-width="2"/><path d="M1378.3 571V678" stroke="#0b4a95" stroke-width="2"/><path d="M1376 412V427M1376 446V460M1376 474.5V489M1376 504.5V520" stroke="#0b4a95" stroke-width="2"/><path d="M1370.5 419 1376 411.3 1381.5 419" stroke="#0b4a95" stroke-width="2" fill="none"/><path d="M1337.7 543.3L1368.4 513.3A23.8 23.8 0 0 1 1401.6 547.3L1370.9 577.3" fill="#ffffff" stroke="#0b4a95" stroke-width="2"/><circle cx="1354.3" cy="560.3" r="23.8" fill="#e3e9f3" stroke="#0b4a95" stroke-width="2"/><path d="M1495.4 542.4L1525.6 512.6A23.6 23.6 0 0 1 1558.8 546.2L1528.6 576.0" fill="#ffffff" stroke="#0b4a95" stroke-width="2"/><circle cx="1512" cy="559.2" r="23.6" fill="#e3e9f3" stroke="#0b4a95" stroke-width="2"/><path d="M1376 504.5V520" stroke="#0b4a95" stroke-width="2"/><path d="M1729.3 527H1679.5Q1672 527 1672 534.5V570.3Q1672 577.7 1679.5 577.7H1729.3" stroke="#0b4a95" stroke-width="2" fill="#ffffff"/><ellipse cx="1729.3" cy="552.3" rx="7" ry="25.3" fill="#e3e9f3" stroke="#0b4a95" stroke-width="2"/><path d="M1353.5 678.6V729.6M1402.5 678.6V729.6" stroke="#0b4a95" stroke-width="2"/><ellipse cx="1378" cy="729.6" rx="24.5" ry="12.7" fill="#e3e9f3" stroke="#0b4a95" stroke-width="2"/><ellipse cx="1378" cy="678.6" rx="24.5" ry="12.7" fill="#e3e9f3" stroke="#0b4a95" stroke-width="2"/><path d="M1378.3 665V678" stroke="#0b4a95" stroke-width="2"/><path d="M1403 512.3 1413.3 501.3M1422 493 1433 482M1442 472.5 1453.5 461.3" stroke="#0b4a95" stroke-width="2"/><path d="M1442.2 461.2H1454V469.5" stroke="#0b4a95" stroke-width="2" fill="none"/><path d="M1560.6 511.5 1570.3 501.8M1580 491.2 1590.6 481.5M1599.4 471.8 1610.5 460.8" stroke="#0b4a95" stroke-width="2"/><path d="M1603.5 460.5H1611V468" stroke="#0b4a95" stroke-width="2" fill="none"/><path d="M1393.4 499.2C1396 490 1402 487.5 1407 487.5C1418 487.5 1428 496 1425.3 519" stroke="#0b4a95" stroke-width="2" fill="none"/><path d="M1420.8 512.5 1425.3 519.5 1433 515.5" stroke="#0b4a95" stroke-width="2" fill="none"/><path d="M1551.8 498.2C1554 490 1560 486.8 1566 486.8C1577 486.8 1587 495 1583.5 518.5" stroke="#0b4a95" stroke-width="2" fill="none"/><path d="M1579.5 512 1583.5 518.8 1591.5 515.5" stroke="#0b4a95" stroke-width="2" fill="none"/><path d="M1781.7 540.4C1780 525 1774.5 517 1767.3 517C1759 517 1753.6 532 1753.6 551.4C1753.6 572 1760 582.2 1767.3 582.2C1772 582.2 1776 579 1778.3 575" stroke="#0b4a95" stroke-width="2" fill="none"/><path d="M1770.5 574.2 1778.3 574.5 1778.5 582" stroke="#0b4a95" stroke-width="2" fill="none"/><path d="M1368.2 620.4C1355 623 1344.7 630 1344.7 638.4C1344.7 649 1360 656 1379 656C1398 656 1412.4 648 1412.4 637.5C1412.4 632 1410 628 1407.5 626" stroke="#0b4a95" stroke-width="2" fill="none"/><path d="M1404.8 634.8 1406.5 625.7 1415.3 625.7" stroke="#0b4a95" stroke-width="2" fill="none"/><path d="M1357.7 554.1L1357.7 503.6" stroke="#d10a0a" stroke-width="2.2"/><path d="M1361.9 508.6L1357.7 503.6L1353.5 508.6" stroke="#d10a0a" stroke-width="2.2" fill="none"/><path d="M1357.7 554.1L1409 554.1" stroke="#d10a0a" stroke-width="2.2"/><path d="M1404.0 558.3L1409 554.1L1404.0 549.9" stroke="#d10a0a" stroke-width="2.2" fill="none"/><path d="M1357.7 554.1L1323.5 589" stroke="#d10a0a" stroke-width="2.2"/><path d="M1324.0 582.5L1323.5 589L1330.0 588.4" stroke="#d10a0a" stroke-width="2.2" fill="none"/><path d="M1513.8 553.8L1513.8 502.8" stroke="#d10a0a" stroke-width="2.2"/><path d="M1518.0 507.8L1513.8 502.8L1509.6 507.8" stroke="#d10a0a" stroke-width="2.2" fill="none"/><path d="M1513.8 553.8L1565.8 553.8" stroke="#d10a0a" stroke-width="2.2"/><path d="M1560.8 558.0L1565.8 553.8L1560.8 549.6" stroke="#d10a0a" stroke-width="2.2" fill="none"/><path d="M1513.8 553.8L1479.6 588.8" stroke="#d10a0a" stroke-width="2.2"/><path d="M1480.1 582.3L1479.6 588.8L1486.1 588.2" stroke="#d10a0a" stroke-width="2.2" fill="none"/><path d="M1816.7 552.7L1816.7 501.5" stroke="#d10a0a" stroke-width="2.2"/><path d="M1820.9 506.5L1816.7 501.5L1812.5 506.5" stroke="#d10a0a" stroke-width="2.2" fill="none"/><path d="M1816.7 552.7L1868 552.7" stroke="#d10a0a" stroke-width="2.2"/><path d="M1863.0 556.9L1868 552.7L1863.0 548.5" stroke="#d10a0a" stroke-width="2.2" fill="none"/><path d="M1816.7 552.7L1782.6 588.2" stroke="#d10a0a" stroke-width="2.2"/><path d="M1783.0 581.7L1782.6 588.2L1789.1 587.5" stroke="#d10a0a" stroke-width="2.2" fill="none"/><path d="M1377 727.6L1377 677" stroke="#d10a0a" stroke-width="2.2"/><path d="M1381.2 682.0L1377 677L1372.8 682.0" stroke="#d10a0a" stroke-width="2.2" fill="none"/><path d="M1377 727.6L1325.3 727.6" stroke="#d10a0a" stroke-width="2.2"/><path d="M1330.3 723.4L1325.3 727.6L1330.3 731.8" stroke="#d10a0a" stroke-width="2.2" fill="none"/><path d="M1377 727.6L1412.2 693.5" stroke="#d10a0a" stroke-width="2.2"/><path d="M1411.5 700.0L1412.2 693.5L1405.7 694.0" stroke="#d10a0a" stroke-width="2.2" fill="none"/><text x="1364" y="502.3" fill="#d03232" font-size="10.5" font-family="Liberation Sans, sans-serif">Y1</text><text x="1399.5" y="574.3" fill="#d03232" font-size="10.5" font-family="Liberation Sans, sans-serif">X1</text><text x="1319.5" y="606.5" fill="#d03232" font-size="10.5" font-family="Liberation Sans, sans-serif">Z1</text><text x="1443" y="520" fill="#d03232" font-size="10.5" font-family="Liberation Sans, sans-serif">θ2</text><text x="1521.5" y="502.8" fill="#d03232" font-size="10.5" font-family="Liberation Sans, sans-serif">Y2,X3</text><text x="1556" y="574.3" fill="#d03232" font-size="10.5" font-family="Liberation Sans, sans-serif">X2,Z3</text><text x="1473" y="607" fill="#d03232" font-size="10.5" font-family="Liberation Sans, sans-serif">Z2,Y3</text><text x="1597.3" y="519.6" fill="#d03232" font-size="10.5" font-family="Liberation Sans, sans-serif">θ3</text><text x="1793" y="509" fill="#d03232" font-size="10.5" font-family="Liberation Sans, sans-serif">X4</text><text x="1782.7" y="529.6" fill="#d03232" font-size="10.5" font-family="Liberation Sans, sans-serif">θ4</text><text x="1865" y="542" fill="#d03232" font-size="10.5" font-family="Liberation Sans, sans-serif">Z4</text><text x="1794.5" y="605" fill="#d03232" font-size="10.5" font-family="Liberation Sans, sans-serif">Y4</text><text x="1427.7" y="630.8" fill="#d03232" font-size="10.5" font-family="Liberation Sans, sans-serif">θ1</text><text x="1386.5" y="665" fill="#d03232" font-size="10.5" font-family="Liberation Sans, sans-serif">Z0</text><text x="1421" y="700.4" fill="#d03232" font-size="10.5" font-family="Liberation Sans, sans-serif">X0</text><text x="1321" y="747.5" fill="#d03232" font-size="10.5" font-family="Liberation Sans, sans-serif">Y0</text></svg>
<div style="position:absolute;left:1211px;top:313px;width:699px;height:482px;box-shadow:0 0 2px rgba(0,0,0,.6);pointer-events:none"></div>
</body></html>
